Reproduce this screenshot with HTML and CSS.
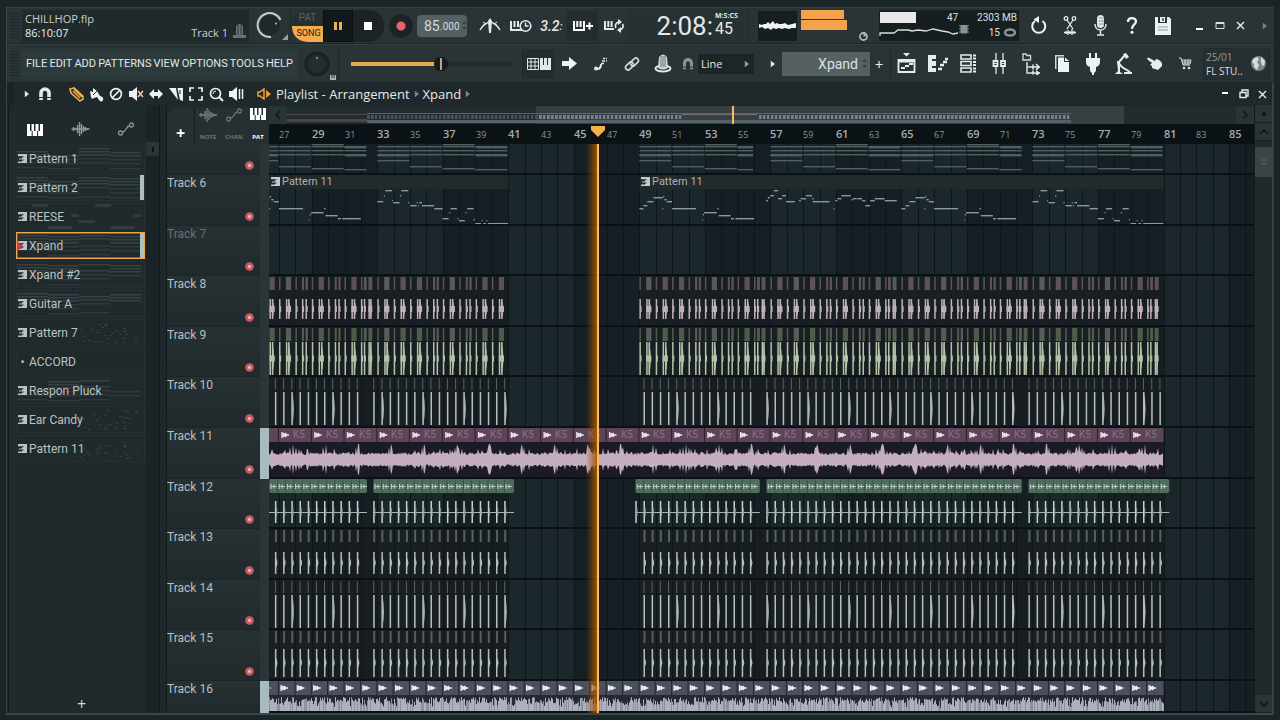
FILE: index.html
```html
<!DOCTYPE html>
<html lang="en">
<head>
<meta charset="utf-8">
<title>CHILLHOP.flp</title>
<link rel="stylesheet" href="styles.css">
</head>
<body>
<svg class="sprite" aria-hidden="true">
  <symbol id="piano" viewBox="0 0 16 12"><path d="M0 0h3v7h1.500V0h2.500v0h0v7h1.500V0h3v7H13V0h3v12H0z" fill="currentColor"/><path d="M5.200 7v5M10.600 7v5" stroke="#20292b" stroke-width="1"/></symbol>
  <symbol id="wave" viewBox="0 0 18 14"><path d="M0 7h18M2 5v4M4 6v2M6 3v8M8 0v14M10 2v10M12 4v6M14 5v4M16 6v2" stroke="currentColor" stroke-width="1.500" fill="none"/></symbol>
  <symbol id="auto" viewBox="0 0 16 14"><g fill="none" stroke="currentColor" stroke-width="1.300"><circle cx="2.500" cy="11" r="2"/><circle cx="13.500" cy="3" r="2"/><path d="M4.500 10c4 0 3-6 7-6"/></g></symbol>
  <symbol id="clip" viewBox="0 0 9 9"><path d="M0 0h9v9H0V7.500h4V6H1V4.500h3V3H0z" fill="currentColor"/><path d="M0 2.200h5.500v1H0zM0 5.400h5.500v1H0z" fill="#20292b"/></symbol>
  <symbol id="magnet" viewBox="0 0 16 16"><path d="M4 14V7a4 4 0 0 1 8 0v7" fill="none" stroke="currentColor" stroke-width="3.600"/><path d="M1 11.500h14" stroke="#20292b" stroke-width="1"/></symbol>
  <symbol id="tri" viewBox="0 0 6 8"><path d="M1 0l5 4-5 4z" fill="currentColor"/></symbol>
</svg>
<div class="app">
  <header class="toolbar">
    <div class="bar">
      <span class="grip"></span>
      <div class="hint">
        <div class="hint-text"><span>CHILLHOP.flp</span><span class="bright">86:10:07</span></div>
        <span class="hint-track">Track 1</span>
        <svg class="i" width="13" height="17" viewBox="0 0 13 17"><path d="M3 3q3.500-4 7 0v9h3v3H0v-3h3z" fill="#677173"/><path d="M5 2v10M8 2v10" stroke="#323b3d"/></svg>
      </div>
      <div class="knob-box">
        <svg width="36" height="36" viewBox="0 0 36 36"><circle cx="16" cy="17" r="10" fill="#20282a"/><path d="M17 29a12 12 0 1 1 9.500-17" fill="none" stroke="#c3cbcb" stroke-width="2"/><circle cx="22" cy="15.500" r="1" fill="#bcc5c5"/><path d="M34 26v6h-6z" fill="#98a1a2"/></svg>
      </div>
      <div class="transport">
        <div class="mode"><button class="pat">PAT</button><button class="song">SONG</button></div>
        <button class="pause" aria-label="Pause"><svg width="8" height="8"><path d="M0 0h3v8H0zM5 0h3v8H5z" fill="#eeb04c"/></svg></button>
        <button class="stop" aria-label="Stop"><svg width="8" height="8"><path d="M0 0h8v8H0z" fill="#fff"/></svg></button>
      </div>
      <button class="rec" aria-label="Record"></button>
      <label class="tempo"><input aria-label="Tempo" value="85"><span>.000</span><svg width="5" height="9"><path d="M0 3l2.500-3L5 3zM0 6l2.500 3L5 6z" fill="#39434a"/></svg></label>
      <div class="cells lead">
        <button class="cell" aria-label="Metronome"><svg width="22" height="16" viewBox="0 0 22 16"><path d="M1 12Q5 5 11 4q6 1 10 8" fill="none" stroke="#e4e9e9" stroke-width="1.500"/><path d="M7 6l-3-2M15 6l3-2" stroke="#e4e9e9"/><path d="M9 3l2-3 2 3-1 12h-2z" fill="#e4e9e9"/></svg></button>
        <button class="cell" aria-label="Wait for input"><svg width="22" height="14" viewBox="0 0 22 14"><path d="M1 2v9h11M4.500 2v6M8 2v6" fill="none" stroke="#e4e9e9" stroke-width="2"/><circle cx="15.500" cy="7" r="5.300" fill="#2a3335" stroke="#e4e9e9" stroke-width="1.600"/><path d="M15.500 3.500V7h3" fill="none" stroke="#e4e9e9" stroke-width="1.300"/></svg></button>
        <button class="cell count" aria-label="Countdown">3.2<small>:</small></button>
        <button class="cell on" aria-label="Overdub"><svg width="20" height="14" viewBox="0 0 20 14"><path d="M1 2v9h10V2M4.300 2v6M7.600 2v6" fill="none" stroke="#fff" stroke-width="2"/><path d="M13 7h7M16.500 3.500v7" stroke="#fff" stroke-width="2"/></svg></button>
        <button class="cell" aria-label="Loop record"><svg width="20" height="14" viewBox="0 0 20 14"><path d="M1 2v8h9M4.300 2v6M7.600 2v6" fill="none" stroke="#e4e9e9" stroke-width="2"/><path d="M12 9a4 4 0 0 1 3-6M18.500 5a4 4 0 0 1-3 6" fill="none" stroke="#e4e9e9" stroke-width="1.700"/><path d="M14 0l4 3-4 3zM17 8v6l-4-3z" fill="#e4e9e9"/></svg></button>
      </div>
      <div class="clock"><span class="big">2:08:</span><span class="small"><i>M:S:CS</i>45</span></div>
      <div class="scope"><svg width="39" height="30" viewBox="0 0 39 30"><path d="M1 13l3 1 2-1 2 0 2-2 2 2 3-3 2 3 2-1 2 1 3 0 3-1 3 2 4-1 4-1v5l-4 0-3 1-4-1-3 1-3-1-3 1-3-1-2 2-3-2-3 1-3-2-3 1z" fill="#eef2f2"/></svg></div>
      <div class="meter"><span></span><span class="wide"></span><svg width="11" height="9" viewBox="0 0 11 9"><circle cx="5.500" cy="4.500" r="3.600" fill="none" stroke="#bac1c1" stroke-width="1.600"/><path d="M5.500 4.500V1l3 3z" fill="#bac1c1"/></svg></div>
      <div class="cpu">
        <svg width="80" height="30" viewBox="0 0 80 30"><path d="M1 2h36v11H1z" fill="#e7e9e9"/><path d="M1 26v-3h14l4-3 10 0 4 1 6-1 8 1 7-2 9 2 6 1 5 2 5-1" fill="none" stroke="#d8dede" stroke-width="1.300"/></svg>
        <div class="cpu-num"><span>47</span><svg width="11" height="9"><path d="M2 0h6v8H2zM0 1h10M0 4h10M0 7h10" fill="#889193" stroke="#889193"/></svg></div>
        <div class="cpu-mem"><span>2303 MB</span><span>15 <svg width="14" height="9"><ellipse cx="7" cy="4.500" rx="5" ry="3" fill="none" stroke="#8b9394" stroke-width="2.500"/></svg></span></div>
      </div>
      <div class="cells">
        <button class="cell" aria-label="Undo"><svg width="18" height="19" viewBox="0 0 18 19"><path d="M5 5a6.500 6.500 0 1 0 7.500 0" fill="none" stroke="#f1f4f4" stroke-width="2"/><path d="M9 0v7L3.500 3.500z" fill="#f1f4f4"/></svg></button>
        <button class="cell" aria-label="Cut"><svg width="14" height="20" viewBox="0 0 14 20"><g fill="none" stroke="#e6ebeb" stroke-width="1.300"><circle cx="3" cy="2.500" r="1.800"/><circle cx="11" cy="2.500" r="1.800"/><path d="M4 4l6 9M10 4L4 13"/><path d="M1 16.500h12M3 15v3M5 14v5M7 15v3M9 13v6M11 15v3"/></g></svg></button>
        <button class="cell" aria-label="Microphone"><svg width="13" height="21" viewBox="0 0 13 21"><rect x="3" width="7" height="13" rx="3.500" fill="#dfe5e5"/><path d="M5 3h5M5 6h5M5 9h5" stroke="#8d9798"/><path d="M1 9c0 8 11 8 11 0M6.500 15v5M3 20h7" fill="none" stroke="#dfe5e5" stroke-width="1.500"/></svg></button>
        <button class="cell" aria-label="Help"><svg width="12" height="17" viewBox="0 0 12 17"><path d="M2 5c0-5 8-5 8-.5C10 7.500 6 7.500 6 12" fill="none" stroke="#f3f5f5" stroke-width="2.300"/><circle cx="6" cy="15.300" r="1.500" fill="#f3f5f5"/></svg></button>
        <button class="cell" aria-label="Save"><svg width="16" height="18" viewBox="0 0 16 18"><path d="M0 0h3v6h9V0h2l2 2v16H0z" fill="#eef1f1"/><path d="M5 0h5v5H5z" fill="#eef1f1"/><path d="M8 1v3" stroke="#333d3f" stroke-width="1.500"/><path d="M3 10h10M3 13h10" stroke="#8d9798"/></svg></button>
      </div>
      <span class="fill"></span>
      <div class="win">
        <button aria-label="Minimize"><svg width="8" height="10"><path d="M0 8h7" stroke="#fff" stroke-width="2"/></svg></button>
        <button aria-label="Restore"><svg width="10" height="9"><path d="M1 1.500h8v6H1z" fill="none" stroke="#d8dddd"/><path d="M1 2h8" stroke="#d8dddd" stroke-width="2"/></svg></button>
        <button aria-label="Close"><svg width="9" height="9"><path d="M1 1l7 7M8 1L1 8" stroke="#e8ecec" stroke-width="1.400"/></svg></button>
        <svg class="dim" width="5" height="8"><use href="#tri"/></svg>
      </div>
    </div>
    <div class="bar second">
      <span class="grip"></span>
      <nav class="menu"><a href="#">FILE</a><a href="#">EDIT</a><a href="#">ADD</a><a href="#">PATTERNS</a><a href="#">VIEW</a><a href="#">OPTIONS</a><a href="#">TOOLS</a><a href="#">HELP</a></nav>
      <div class="knob-box pitch"><svg width="36" height="34" viewBox="0 0 36 34"><circle cx="16" cy="17" r="12" fill="#1d2527" stroke="#161d1f"/><circle cx="16" cy="17" r="9" fill="#242d2f"/><circle cx="16" cy="11" r="1" fill="#9aa5a6"/><path d="M29 28h6v5h-6z" fill="#aab2b2"/><path d="M31 28v3M33 28v3" stroke="#333"/></svg></div>
      <input class="slider" type="range" aria-label="Main pitch" value="56">
      <div class="cells lead2">
        <button class="cell on" aria-label="Typing keyboard"><svg width="24" height="12" viewBox="0 0 24 12"><path d="M.5.5h11v11H.5zM.5 4h11M.5 8h11M4 .5v11M8 .5v11" fill="none" stroke="#e2e7e7"/><path d="M13 0h3v7h1V0h3v7h1V0h3v12H13z" fill="#e2e7e7"/></svg></button>
        <button class="cell" aria-label="Step edit"><svg width="15" height="13"><path d="M0 4h7V0l8 6.500L7 13V9H0z" fill="#f1f4f4"/></svg></button>
        <button class="cell" aria-label="Slide"><svg width="15" height="14" viewBox="0 0 15 14"><circle cx="3" cy="11.500" r="2" fill="#e4e9e9"/><path d="M4 12q4 0 4-5" fill="none" stroke="#e4e9e9" stroke-width="2"/><path d="M8 6.500h3M10 1.500h2M13 1.500h1M9 4h3M13 4h1" stroke="#e4e9e9" stroke-width="1.600"/></svg></button>
        <button class="cell" aria-label="Link"><svg width="16" height="16" viewBox="0 0 16 16"><g fill="none" stroke="#d6dcdc" stroke-width="1.600"><rect x="1" y="7.500" width="9" height="5" rx="2.500" transform="rotate(-45 5.500 10)"/><rect x="6" y="3.500" width="9" height="5" rx="2.500" transform="rotate(-45 10.500 6)"/></g></svg></button>
        <button class="cell" aria-label="Multilink"><svg width="18" height="19" viewBox="0 0 18 19"><ellipse cx="9" cy="14.500" rx="7.500" ry="3" fill="#2a3335" stroke="#e4e9e9" stroke-width="2"/><path d="M5 3q4-5 8 0l1 11q-5 3-10 0z" fill="#cfd6d6"/><path d="M7 2v11M9 2v11M11 2v11" stroke="#697274"/></svg></button>
      </div>
      <svg class="snap-icon" width="16" height="14" viewBox="0 0 16 16"><use href="#magnet"/></svg>
      <label class="snap"><select aria-label="Snap"><option>Line</option></select><svg width="5" height="8"><use href="#tri"/></svg></label>
      <svg class="pick-arrow" width="5" height="8"><use href="#tri"/></svg>
      <button class="pick">Xpand <svg width="5" height="9"><path d="M0 3l2.500-3L5 3zM0 6l2.500 3L5 6z" fill="#39434a"/></svg></button>
      <button class="plus">+</button>
      <div class="cells last">
        <button class="cell" aria-label="Playlist"><svg width="19" height="21" viewBox="0 0 19 21"><path d="M6 0h7l-3.500 3.500z" fill="#e8ecec"/><path d="M1.500 7h16v12h-16z" fill="none" stroke="#e8ecec" stroke-width="1.800"/><path d="M1 8.500h17M4 15h4M8 13h4M12 11h4" stroke="#e8ecec" stroke-width="2"/></svg></button>
        <button class="cell" aria-label="Piano roll"><svg width="20" height="18" viewBox="0 0 20 18"><path d="M0 0h8v4H4v2h4v5H4v2h4v4H0z" fill="#e8ecec"/><path d="M10 14h4M12 10h4M15 7h4M17 4h3" stroke="#e8ecec" stroke-width="2.500"/></svg></button>
        <button class="cell" aria-label="Channel rack"><svg width="17" height="19" viewBox="0 0 17 19"><path d="M1 1h10v4H1zM1 7.500h10v4H1zM1 14h10v4H1z" fill="none" stroke="#e8ecec" stroke-width="1.600"/><path d="M13 1.500h3M13 4.500h3M13 8h3M13 11h3M13 14.500h3M13 17.500h3" stroke="#e8ecec" stroke-width="2"/></svg></button>
        <button class="cell" aria-label="Mixer"><svg width="15" height="21" viewBox="0 0 15 21"><path d="M4 0v21M11 0v21" stroke="#d6dcdc" stroke-width="1.400"/><path d="M1.500 8h4v5h-4zM9 8h4v5H9z" fill="#2a3335" stroke="#e8ecec" stroke-width="1.800"/><path d="M2 10.500h3M9.500 10.500h3" stroke="#e8ecec"/></svg></button>
        <button class="cell" aria-label="Browser"><svg width="18" height="22" viewBox="0 0 18 22"><path d="M1 1h3l1 1.500h3.500V7H1z" fill="none" stroke="#d6dcdc" stroke-width="1.300"/><path d="M5 9v11h4M5 14h4" fill="none" stroke="#d6dcdc" stroke-width="1.500"/><path d="M9 14h9M9 20h9M11 11.500v5M14 11l3 3-3 3M11 17.500v4M14 18l3 2-3 2" fill="none" stroke="#e8ecec" stroke-width="1.500"/></svg></button>
        <button class="cell" aria-label="Project"><svg width="14" height="17" viewBox="0 0 14 17"><path d="M0 0h9v1.500H1.500V14H0z" fill="#cfd6d6"/><path d="M3 2.500h6V7h5v10H3z" fill="#f1f4f4"/><path d="M10 2.500l4 3.500h-4z" fill="#f1f4f4"/></svg></button>
        <button class="cell" aria-label="Plugins"><svg width="14" height="22" viewBox="0 0 14 22"><path d="M3 0h2v5h4V0h2v5h3v4q0 4-4 5v3q0 2-2 3v2H6v-2q-2-1-2-3v-3q-4-1-4-5V5h3z" fill="#eef1f1"/></svg></button>
        <button class="cell" aria-label="Tempo tap"><svg width="17" height="22" viewBox="0 0 17 22"><path d="M4 9l6-7M3 9l4 5 8 5" fill="none" stroke="#e8ecec" stroke-width="2"/><path d="M8 1l3-1 3 4-3 2zM2 8h3v11l3 2H0l3-3z" fill="#e8ecec"/><path d="M9 20h8" stroke="#e8ecec" stroke-width="2"/></svg></button>
        <button class="cell" aria-label="Touch"><svg width="16" height="14" viewBox="0 0 16 14"><path d="M0 1q2-1 4 1l4 2 1-2q3 0 6 4v3l-4 4-6-2v-2L3 8l2-2-4-3z" fill="#e8ecec"/></svg></button>
        <button class="cell" aria-label="Shop"><svg width="13" height="13" viewBox="0 0 13 13"><path d="M0 1h2l2 7h7M3 3h9l-1 4H4M6 3v4M9 3v4M3 5h9" fill="none" stroke="#d6dcdc"/><circle cx="5" cy="11" r="1.300" fill="#d6dcdc"/><circle cx="10" cy="11" r="1.300" fill="#d6dcdc"/></svg></button>
      </div>
      <div class="news"><span>25/01<b>FL STU..</b></span><svg width="17" height="17" viewBox="0 0 17 17"><circle cx="8.500" cy="8.500" r="7.500" fill="#7b8686"/><path d="M3 4l4-2 2 2-2 3 2 3-2 5-3-3 0-3-2-2zM11 2l4 4-1 5-2-1-1-3z" fill="#d5dada"/></svg></div>
    </div>
  </header>

  <main class="playlist">
    <div class="title">
      <svg class="t-arrow" width="5" height="8"><use href="#tri"/></svg>
      <button aria-label="Snap"><svg width="16" height="16"><use href="#magnet"/></svg></button>
      <span class="space"></span>
      <button aria-label="Draw"><svg width="15" height="15" viewBox="0 0 15 15"><path d="M1 2l4-1 9 8v3l-3 2L2 6zM4 4l7 7M5 2l8 8" fill="none" stroke="#f0ab48" stroke-width="1.600"/></svg></button>
      <button aria-label="Paint"><svg width="15" height="15" viewBox="0 0 15 15"><path d="M1 4l3 1 0-4 4 3 3 5q4 1 3 4t-4 0l-2-3-3 1-2 1-1-2z" fill="#eef1f1"/><path d="M4 8l4-4" stroke="#20292b"/></svg></button>
      <button aria-label="Delete"><svg width="14" height="14"><circle cx="7" cy="7" r="5.400" fill="none" stroke="#eef1f1" stroke-width="1.700"/><path d="M3 11l8-8" stroke="#eef1f1" stroke-width="1.700"/></svg></button>
      <button aria-label="Mute"><svg width="15" height="14" viewBox="0 0 15 14"><path d="M0 4h3l5-4v14l-5-4H0z" fill="#eef1f1"/><path d="M9 4l5 6M14 4l-5 6" stroke="#f0c9b0" stroke-width="1.500"/></svg></button>
      <button aria-label="Slip"><svg width="14" height="10"><path d="M0 5l5-5v3h4V0l5 5-5 5V7H5v3z" fill="#eef1f1"/></svg></button>
      <button aria-label="Slice"><svg width="15" height="15" viewBox="0 0 15 15"><path d="M0 1h7l2 12z" fill="#eef1f1"/><path d="M8.500 1H14v13l-3-1z" fill="#eef1f1"/><path d="M11 3v4" stroke="#20292b"/></svg></button>
      <button aria-label="Select"><svg width="14" height="14"><path d="M1 5V1h4M9 1h4v4M13 9v4H9M5 13H1V9" fill="none" stroke="#eef1f1" stroke-width="1.700"/></svg></button>
      <button aria-label="Zoom"><svg width="15" height="15"><circle cx="6.500" cy="6.500" r="5" fill="none" stroke="#eef1f1" stroke-width="1.700"/><path d="M10 10l4 4" stroke="#eef1f1" stroke-width="2"/><path d="M4 7q0-3 3-3" fill="none" stroke="#eef1f1"/></svg></button>
      <button aria-label="Playback"><svg width="15" height="14"><path d="M0 4h3l5-4v14l-5-4H0z" fill="#eef1f1"/><path d="M10.500 2v10M13.500 2v10" stroke="#eef1f1" stroke-width="1.500"/></svg></button>
      <div class="crumbs"><svg width="15" height="12"><path d="M1 4h2l4-3v10L3 8H1z" fill="none" stroke="#f0a040" stroke-width="1.500"/><path d="M9 2l5 4-5 4z" fill="#f09a35"/></svg><span>Playlist - Arrangement</span><svg class="dim" width="5" height="8"><use href="#tri"/></svg><span>Xpand</span><svg class="dim" width="5" height="8"><use href="#tri"/></svg></div>
      <span class="fill"></span>
      <div class="win sub">
        <button aria-label="Minimize"><svg width="8" height="10"><path d="M0 4h6" stroke="#fff" stroke-width="2"/></svg></button>
        <button aria-label="Restore"><svg width="10" height="10"><path d="M1 3.500h6v5H1zM3 3V1h6v6H7" fill="none" stroke="#e8ecec" stroke-width="1.400"/></svg></button>
        <button aria-label="Close"><svg width="9" height="9"><path d="M1 1l7 7M8 1L1 8" stroke="#e8ecec" stroke-width="1.400"/></svg></button>
      </div>
    </div>
    <div class="work">
      <aside class="picker">
        <div class="tabs"><button class="active" aria-label="Patterns"><svg width="16" height="12"><use href="#piano"/></svg></button><button aria-label="Audio"><svg width="19" height="14"><use href="#wave"/></svg></button><button aria-label="Automation"><svg width="16" height="14"><use href="#auto"/></svg></button></div>
        <ul class="patterns" id="patterns"></ul>
        <button class="add">+</button>
      </aside>
      <div class="pick-scroll"><button aria-label="Scroll"><svg width="2" height="5"><path d="M0 0h2v5H0z" fill="#0e1416"/></svg></button></div>
      <section class="tracks">
        <div class="corner">
          <button class="add-track">+</button>
          <button><svg width="18" height="14"><use href="#wave"/></svg>NOTE</button>
          <button><svg width="16" height="14"><use href="#auto"/></svg>CHAN</button>
          <button class="active"><svg width="16" height="12"><use href="#piano"/></svg>PAT</button>
        </div>
        <div class="heads" id="heads"></div>
      </section>
      <section class="arrange">
        <div class="overview"><button aria-label="Scroll left"><svg width="6" height="10"><path d="M5 1L1 5l4 4" fill="none" stroke="#0e1517" stroke-width="1.500"/></svg></button><div class="map" id="map"></div><button aria-label="Scroll right"><svg width="6" height="10"><path d="M1 1l4 4-4 4" fill="none" stroke="#0e1517" stroke-width="1.500"/></svg></button></div>
        <div class="ruler" id="ruler"></div>
        <div class="lanes" id="lanes"></div>
        <svg class="playhead" id="playhead" aria-hidden="true"></svg>
      </section>
      <div class="vscroll"><button aria-label="Menu"><svg width="4" height="4"><circle cx="2" cy="2" r="2" fill="#0e1517"/></svg></button><button aria-label="Up"><svg width="10" height="6"><path d="M1 5l4-4 4 4" fill="none" stroke="#0e1517" stroke-width="1.500"/></svg></button><span class="thumb"><svg width="6" height="6"><path d="M0 1h6M0 5h6" stroke="#5c6668"/></svg></span><span class="fill"></span><button aria-label="Down"><svg width="10" height="6"><path d="M1 1l4 4 4-4" fill="none" stroke="#0e1517" stroke-width="1.500"/></svg></button></div>
    </div>
  </main>
</div>
<script src="app.js"></script>
</body>
</html>
```
FILE: styles.css
```css
* { box-sizing: border-box; }
body { margin: 0; background: #1c2427; color: #c9d0d0; font: 12px/14px "Open Sans", "Noto Sans", sans-serif; }
button, input, select { font: inherit; color: inherit; background: none; border: 0; padding: 0; margin: 0; }
button { display: flex; align-items: center; justify-content: center; }
svg { display: block; flex: none; }
.sprite { position: absolute; width: 0; height: 0; }
.fill { flex: 1; }
.dim { color: #7d8788; }

.app { display: flex; flex-direction: column; min-height: 100vh; padding: 7px 6px 5px 6px; background: #1b2426; }
.toolbar { background: #2a3436; border-left: 1px solid #394345; }
.bar { display: flex; align-items: center; height: 37px; border-bottom: 1px solid #1c2527; border-top: 1px solid #343e40; }
.bar.second { height: 39px; }
.grip { width: 9px; height: 29px; margin: 0 3px 0 3px; background: repeating-linear-gradient(#2a3436 0 2px, #1e2729 2px 3px); }
.hint { display: flex; align-items: flex-start; width: 226px; height: 32px; padding: 2px 2px 0 3px; background: #20292b; }
.hint-text { flex: 1; font-size: 11px; }
.hint-text span { display: block; }
.bright { color: #eef1f1; }
.hint-track { font-size: 11px; padding: 14px 5px 0 0; }
.hint .i { margin-top: 11px; }
.knob-box { width: 43px; height: 36px; border-left: 1px solid #20292b; border-right: 1px solid #20292b; padding-left: 5px; }
.transport { display: flex; width: 92px; height: 32px; margin-left: 1px; background: #1b2325; border-radius: 15px; overflow: hidden; }
.mode { width: 31px; font: 10px/15px Roboto, sans-serif; }
.mode button { width: 31px; height: 16px; }
.pat { color: #5a6466; background: #262f31; }
.mode .song { padding-left: 2px; font-size: 9px; color: #2b1c08; background: #f2ab50; border-radius: 0 0 0 14px; }
.pause { width: 30px; background: #12191b; border: 1px solid #0b1113; }
.stop { width: 30px; }
.rec { width: 24px; height: 24px; margin: 0 4px 0 5px; border-radius: 50%; background: radial-gradient(circle, #ee6270 0 4px, #1b2325 5px 11px); }
.tempo { display: flex; align-items: center; width: 50px; height: 22px; padding-left: 7px; background: #556062; border-radius: 4px; color: #d5dada; font: 10px/20px Roboto, sans-serif; }
.tempo input { width: 16px; font-size: 14px; }
.tempo span { padding-top: 2px; }
.tempo svg { margin-left: 2px; }
.cells { display: flex; }
.lead { margin-left: 7px; }
.cell { width: 31px; height: 30px; }
.cell.on { background: #232c2e; }
.count { font: italic 500 14px/20px Roboto, sans-serif; color: #e4e9e9; }
.clock { display: flex; justify-content: flex-end; align-items: center; width: 121px; height: 32px; padding-right: 10px; background: #273133; color: #e2e9e8; font: 26px/30px Roboto, sans-serif; border: 1px solid #242d2f; }
.small { display: flex; flex-direction: column; width: 24px; padding-bottom: 1px; font-size: 16px; line-height: 20px; }
.small i { height: 7px; font: bold 7px/8px "Open Sans", sans-serif; white-space: nowrap; }
.big { padding-right: 2px; }
.scope { width: 39px; height: 30px; margin-left: 8px; background: #161e20; }
.meter { width: 74px; height: 32px; margin-left: 4px; display: flex; flex-direction: column; gap: 1px; }
.meter span { width: 43px; height: 9px; background: #f4a24c; }
.meter .wide { width: 46px; height: 10px; }
.meter svg { margin: 1px 0 0 57px; }
.cpu { display: flex; width: 140px; height: 31px; margin-left: 4px; padding-right: 2px; background: #161e20; color: #dde2e2; font: 10px/15px Roboto, sans-serif; }
.cpu-num { width: 22px; margin-left: -12px; }
.cpu-num svg { margin: 0 0 0 12px; }
.cpu-mem { flex: 1; display: flex; flex-direction: column; align-items: flex-end; white-space: nowrap; }
.cpu-mem span { display: flex; align-items: center; gap: 3px; }
.cpu + .cells { margin-left: 4px; }
.win { display: flex; align-items: center; gap: 11px; padding-right: 7px; }
.win .dim { margin-left: 6px; }

.menu { display: flex; justify-content: space-between; align-items: center; width: 275px; height: 30px; padding: 0 4px; background: #2c3a3b; font: 11px/16px Roboto, sans-serif; }
.menu a { color: #e2e8e8; text-decoration: none; }
.knob-box.pitch { width: 41px; height: 34px; border-left: 0; margin-left: 1px; padding-left: 3px; }
.slider { appearance: none; width: 162px; height: 16px; margin: 0 9px 0 12px; background: linear-gradient(90deg, #f0a552 0 56%, #222b2d 56%) center / 100% 4px no-repeat; }
.slider::-webkit-slider-thumb { appearance: none; width: 14px; height: 14px; border-radius: 50%; background: linear-gradient(90deg, #161d1f 5px, #b5a79a 5px 7px, #161d1f 7px); border: 1px solid #0b1012; }
.lead2 { border-left: 1px solid #20292b; }
.snap-icon { margin-left: 2px; color: #899294; }
.snap { display: flex; align-items: center; width: 56px; height: 20px; margin-left: 2px; padding: 0 5px 0 3px; background: #1d2527; color: #e4e9e9; }
.snap svg { color: #98a1a2; }
.snap select { appearance: none; flex: 1; font-size: 11px; }
.pick-arrow { margin: 0 7px 0 16px; color: #e8ecec; }
.pick { gap: 4px; width: 88px; height: 24px; padding-right: 3px; justify-content: flex-end; background: #556062; color: #dbe1e1; font: 14px/20px Roboto, sans-serif; }
.plus { width: 18px; font-size: 15px; color: #e8ecec; }
.last { margin-left: 2px; border-left: 1px solid #20292b; }
.news { display: flex; flex: 1; align-items: center; justify-content: space-between; height: 32px; margin: 0 4px 0 2px; padding: 0 2px; background: #263032; border: 1px solid #222b2d; font-size: 10px; color: #929b9c; white-space: nowrap; }
.news b { display: block; font-weight: 400; color: #d8dddd; }

.playlist { display: flex; flex-direction: column; flex: 1; border-left: 1px solid #394345; border-right: 2px solid #394345; border-bottom: 2px solid #39464b; background: #1e2729; }
.title { display: flex; align-items: center; height: 22px; padding-left: 10px; background: #1f282a; border-left: 7px solid #1a2224; color: #e4e9e9; }
.title button { width: 20px; height: 20px; }
.t-arrow { margin-right: 6px; }
.title .space { width: 11px; }
.crumbs { display: flex; align-items: center; gap: 4px; margin-left: 11px; font-size: 13px; line-height: 18px; }
.title .win { gap: 0; padding: 0 1px 0 0; }
.title .win button { width: 18px; }

.work { display: flex; flex: 1; }
.picker { display: flex; flex-direction: column; width: 138px; padding: 0 1px 0 9px; background: #20292b; border-left: 1px solid #141b1d; margin-left: 1px; }
.tabs { display: flex; justify-content: space-between; align-items: flex-end; height: 40px; padding: 0 11px 9px 9px; color: #8c9696; }
.tabs .active, .corner .active { color: #fff; }
.patterns { list-style: none; margin: 0; padding: 0; display: flex; flex-direction: column; gap: 2px; flex: 1; }
.patterns li { position: relative; height: 27px; margin-left: -2px; background: #20292b; border: 1px solid #252e30; }
.patterns button { position: relative; display: flex; justify-content: flex-start; gap: 2px; width: 100%; height: 100%; padding-left: 1px; font: 12px/20px Roboto, sans-serif; color: #bcc3c3; }
.patterns .prev { position: absolute; left: 0; top: 0; width: 100%; }
.patterns .sel { border: 1px solid #f0a552; outline: 1px solid #8a6234; outline-offset: -2px; }
.patterns .used::after { content: ""; position: absolute; right: 0; top: 0; bottom: 0; width: 4px; background: #aebfc1; }
.patterns .sel::before { content: ""; position: absolute; z-index: 1; left: 0; top: 8px; border: 5px solid transparent; border-left: 6px solid #d6305e; border-right: 0; }
.bullet { width: 9px; text-align: center; }
.add { height: 18px; font-size: 16px; color: #d5dada; background: #1f282a; }
.pick-scroll { width: 14px; padding-top: 37px; background: #1a2325; border-right: 1px solid #12191b; margin-right: 6px; }
.pick-scroll button { width: 13px; height: 14px; background: #2b3537; }
.tracks { display: flex; flex-direction: column; width: 103px; background: #20292b; border-left: 1px solid #12191b; }
.corner { display: flex; align-items: flex-end; height: 39px; }
.corner button { flex-direction: column; justify-content: space-between; width: 26px; height: 36px; padding-bottom: 3px; background: #263032; color: #6c7678; font: bold 6px/8px "Open Sans", sans-serif; }
.corner .add-track { justify-content: center; width: 28px; padding-top: 16px; font-size: 16px; color: #fff; border-right: 1px solid #161d1f; border-radius: 10px 0 0 0; }
.corner .active { width: 22px; color: #fff; }
.heads, .lanes { flex: 1; display: grid; grid-template-rows: 31px repeat(10, minmax(50px, 1fr)) 32px; }
.head { display: flex; justify-content: space-between; border-right: 9px solid #2b3537; background: linear-gradient(#273032, #20292b); box-shadow: inset 0 -1px #1b2426; font: 12px/16px Roboto, sans-serif; color: #b8c0c0; }
.head.lit { border-right-color: #a8bcc0; }
.head.off { color: #657072; }
.head button { align-self: flex-end; width: 9px; height: 9px; margin: 0 6px 5px 0; border: 1px solid #c0656c; border-radius: 50%; background: radial-gradient(circle, #f5b5b3 0 1px, #d75b64 2px 3px, #3a2024 4px); }
.head:last-child button { visibility: hidden; }
.arrange { position: relative; display: flex; flex-direction: column; flex: 1; min-width: 0; overflow: hidden; background: #162024; }
.overview { display: flex; height: 19px; padding-top: 1px; background: #1d2628; }
.overview button { width: 18px; background: #2a3436; }
.map { flex: 1; min-width: 0; overflow: hidden; background: #222b2e; }
.ruler { position: relative; height: 20px; background: #0a1215; }
.ruler span { position: absolute; top: 4px; font: 9px/14px "Open Sans", sans-serif; color: #8b9495; }
.ruler .major { top: 3px; font-size: 11px; font-weight: 600; color: #a5adad; }
.lane { position: relative; overflow: hidden; border-bottom: 2px solid #0a1114; }
.lane svg { position: absolute; left: 0; top: 0; }
.lane span { position: absolute; font: 11px/14px Roboto, sans-serif; color: #aab2b2; }
.lane .tag { font-size: 10px; color: #8a7087; }
.playhead { position: absolute; left: 310px; top: 19px; width: 30px; height: 100%; }
.vscroll { display: flex; flex-direction: column; width: 18px; background: #20292b; border-left: 1px solid #141b1d; }
.vscroll button { height: 18px; background: #2a3436; border-bottom: 1px solid #182022; }
.vscroll .thumb { display: grid; place-items: center; height: 30px; margin-top: 6px; background: #3a4547; }
```
FILE: app.js
```
const BAR = 16.38;
const X = bar => 10 + (bar - 27) * BAR;
const el = id => document.getElementById(id);
const r = n => Math.round(n * 10) / 10;
const noise = n => { const v = Math.sin(n * 127.1) * 43758.5453; return v - Math.floor(v); };
const rect = (x, y, w, h, c, o) => `<rect x="${r(x)}" y="${y}" width="${r(w)}" height="${r(h)}" fill="${c}"${o ? ` opacity="${o}"` : ""}/>`;

/* pattern picker */
const patterns = ["Pattern 1", "Pattern 2", "REESE", "Xpand", "Xpand #2", "Guitar A", "Pattern 7", "ACCORD", "Respon Pluck", "Ear Candy", "Pattern 11"];
const used = { "Pattern 2": 1, "Xpand": 1 };
const chordRows = [2, 5, 8, 12, 16, 21];
function preview(name, n) {
  let s = "";
  if (name === "ACCORD") return s;
  if (name === "REESE") return [[15,0],[78,0],[54,10],[62,16],[31,22],[94,22],[116,10]].map(([x, y], i) => rect(x, y, i === 2 || i === 6 ? 8 : i > 3 ? 24 : 16, 3, "#323c3e")).join("");
  if (["Pattern 7", "Ear Candy", "Pattern 11"].includes(name)) {
    for (let i = 0; i < 34; i++) s += rect(62 + noise(i + n) * 60, name === "Pattern 11" ? r(4 + i * .5 + noise(i) * 5) : 3 + Math.floor(noise(i * 3 + n) * 20), 2, 1, "#3a4547");
    return s;
  }
  for (let c = 0; c < 4; c++) chordRows.forEach((y, k) => {
    if (noise(c * 9 + k + n) > .25) s += rect(c * 31, y + (c % 2), 31, 1.5, k < 3 ? "#364143" : "#2f393b");
  });
  return s;
}
el("patterns").innerHTML = patterns.map((name, n) => `<li class="${used[name] ? "used " : ""}${name === "Xpand" ? "sel" : ""}"><svg class="prev" height="25">${preview(name, n)}</svg><button>${name === "ACCORD" ? '<span class="bullet">•</span>' : '<svg width="9" height="9"><use href="#clip"/></svg>'}${name}</button></li>`).join("");

/* track headers */
let heads = "";
for (let t = 5; t <= 16; t++) heads += `<div class="head${t === 11 || t === 16 ? " lit" : ""}${t === 7 ? " off" : ""}"><span>${t === 5 ? "" : "Track " + t}</span><button aria-label="Mute track ${t}"></button></div>`;
el("heads").innerHTML = heads;

/* ruler */
let marks = "";
for (let b = 27; b <= 85; b += 2) marks += `<span class="${b % 4 === 1 ? "major" : ""}" style="left:${Math.round(X(b))}px">${b}</span>`;
el("ruler").innerHTML = marks;

/* overview strip */
let m = rect(249, 0, 588, 18, "#354043");
m += rect(0, 8, 80, 1, "#51484e") + rect(0, 13, 80, 3, "#414a48") + rect(80, 7, 704, 1, "#59646a") + rect(80, 14, 704, 3, "#566068");
for (let x = 80; x < 784; x += 4) if (x < 396 || x > 468) m += rect(x, 9, 2 + noise(x), 4, x < 249 ? "#485257" : "#77818a");
m += rect(395, 8, 75, 1, "#7a6b73") + rect(445, 0, 2, 18, "#f3bd5c");
el("map").innerHTML = `<svg width="1200" height="18">${m}</svg>`;

/* note data: x start, x end, y; 49.14 units per bar */
const motifA = [28, [28,40,327],[40,52,318],[52,70,306],[70,98,296],[99,103,292],[103,110,300],[110,126,306],[97,100,327],[126,198,327],[216,218,360],[218,222,346],[222,260,341],[262,266,328],[266,302,350],[303,312,358],[316,372,358]];
const motifB = [421, [408,413,304],[413,420,296],[420,432,289],[432,444,274],[444,456,297],[456,468,289],[468,494,306],[507,512,305],[512,528,297],[528,546,288],[546,550,297],[548,598,306],[611,614,328],[616,622,305],[622,634,298],[634,662,288],[664,668,300],[668,680,297],[682,696,297],[696,706,305],[706,720,318],[720,734,305],[734,764,297],[764,800,305]];
const motifC = [366, [366,384,306],[386,389,289],[390,410,274],[410,413,305],[414,433,310],[434,438,289],[438,459,274],[459,462,309],[465,484,318],[484,487,310],[488,491,318],[492,500,310],[500,537,318],[537,562,327],[562,580,358],[582,585,341],[586,605,327],[607,610,358],[611,629,363],[631,634,341],[636,655,327],[655,658,362],[660,677,372],[679,682,363],[684,692,372],[693,696,363],[698,759,372]];
const melody = (bar, [zero, ...notes]) => notes.map(([a, b, y]) => rect(X(bar) + (a - zero) / 3, Math.round(y / 3 - 76.5), (b - a) / 3, 1.4, "#8b9a99")).join("");

const grid = h => {
  let s = "";
  for (let b = 25; b < 88; b += 8) s += rect(X(b), 0, BAR * 4, h, "#1b272b");
  for (let b = 27; b < 88; b++) s += rect(Math.round(X(b)), 0, 1, h, "#0d161a");
  return s;
};
const sections = [[26, 41], [49, 81]];
const lines = (a, b) => { let s = ""; for (let i = a; i < b; i++) s += rect(Math.round(X(i)), 0, 1, 50, "#0d161a"); return s; };

function chords() {
  const rows = [[6,10,11,16,29], [2,6,10,22], [0,2,6,10,24], [2,3,6,10,11,25]];
  let s = "";
  [[25, 32.4], [33, 41], [49, 56], [57, 65], [65, 72.4], [73, 81]].forEach(([a, end]) => {
    for (let c = 0; c < 4; c++) rows[c].concat(c ? [] : [2]).forEach(y => {
      const from = a + c * 2, to = Math.min(from + 2, end);
      if (to > from) s += rect(X(from), y, (to - from) * BAR - 1, 1.4, "#4f6061");
    });
  });
  return s;
}

/* beat positions for the percussion tracks: [bar, width in bars] */
const beats = [];
sections.forEach(([a, b]) => {
  for (let i = a; i < b; i++) {
    beats.push([i, .09]);
    if (i % 8 === 0 && i !== 40) beats.push([i + .18, .18], [i + .46, .24]);
    else if (i % 8 === 4 || i % 8 === 6) beats.push([i + .4, .13], [i + .62, .14]);
    else beats.push([i + .42, .32]);
  }
});
function drums(tint, bright, top, bottom) {
  const h = bottom - top, mid = (top + bottom) / 2;
  return beats.map(([b, w], i) => {
    const x = X(b), px = w * BAR;
    let s = rect(x, 1, px, 13, i % 3 ? tint : "#656b6a", .8) + rect(x, top, 1.5, h, bright);
    if (px < 3) s += rect(x + 1, mid - 3, 1.2, 6, bright);
    else s += rect(x + px * .45, top, 1.5, h, bright) + `<path d="M${r(x + px * .45)} ${top}q${r(px * .9)} ${h / 2} 0 ${h}z" fill="${bright}"/>` + rect(x, mid - 3, px, 6, bright);
    return s;
  }).join("");
}
const hits = [];
for (let b = 26.75; b < 41; b += .5) if (b !== 32.25) hits.push(b);
for (let b = 49.25; b < 81; b += .5) if (![56.25, 72.25].includes(b)) hits.push(b);
function ticks(top, bottom, tip, bright = "#b3c0bd", head = "#566061") {
  const mid = (top + bottom) / 2;
  return hits.map((b, i) => rect(X(b), 1, tip === 0 ? 1 : 2, 12, head) + rect(X(b), top, 1.5, bottom - top, bright)
    + (tip || i % 5 === 2 ? `<path d="M${r(X(b) + 1)} ${tip ? mid - 5 : top}q3 ${tip ? 4 : mid - top} 0 ${tip ? 10 : bottom - top}z" fill="${bright}"/>` : "")).join("");
}
const arrow = (x, y, c) => `<path d="M${r(x)} ${y - 3}v6M${r(x)} ${y}h7M${r(x + 3)} ${y - 2}l2 2-2 2M${r(x + 1)} ${y - 2}l2 2-2 2" fill="none" stroke="${c}" stroke-width="1.300"/>`;

function bass() {
  let s = rect(0, 0, X(81), 50, "#1a1b26") + rect(0, 0, X(81), 14, "#5d4459"), top = "", low = "";
  for (let b = 25; b < 81; b += 2) s += rect(X(b) - 1, 0, 1, 14, "#2b202b") + arrow(X(b) + 3, 7, b === 25 ? "#a99aaa" : "#eee3ee");
  for (let x = 0; x <= X(81); x++) {
    const p = (((x - X(27)) / BAR) % 2 + 2) % 2;
    const d = Math.abs(p - .85);
    const a = d < .04 ? 16 : d < .2 && x % 3 === 0 ? 13 : 5 + noise(x) * 3 + (noise(x * 5) > .9 ? 4 : 0);
    top += `L${x} ${r(32 - a)}`; low = `L${x} ${r(32 + a * .9)}` + low;
  }
  return s + `<path d="M0 32${top}${low}z" fill="#c4aec0"/>`;
}
function shaker() {
  let s = "";
  [[26, 33], [33, 41.35], [48.75, 56.35], [56.75, 72.35], [72.75, 81.35]].forEach(([a, e], n) => {
    const x0 = n === 0 ? 0 : n === 1 ? 104 : X(a), x1 = n === 0 ? 98 : X(e);
    s += `<rect x="${r(x0)}" y="0" width="${r(x1 - x0)}" height="14" rx="2" fill="#4f6c5d"/>` + rect(x0, 33, x1 - x0, 1, "#a4b8af");
    for (let x = x0 + 2; x < x1 - 5; x += BAR / 2) s += `<path d="M${r(x)} 5v5M${r(x)} 7.500h6M${r(x + 3)} 5.500v4" stroke="#b4cbbf" fill="none" stroke-width="1.200"/>` + rect(x - 2, 0, .6, 14, "#31463b");
  });
  const all = hits.concat([48.75]);
  return s + all.map(b => rect(X(b), 22, 1.5, 22, "#c5d2cc") + rect(X(b) + 1, 29, 1.2, 8, "#879e92")).join("");
}
function kit() {
  let s = rect(0, 0, X(81), 50, "#262834") + rect(0, 0, X(81), 14, "#4c4f5e");
  for (let b = 26; b < 81; b++) s += rect(X(b) - 1, 0, 1, 14, "#22242f") + arrow(X(b) + 2, 7, b === 26 ? "#8d8f9c" : "#eef0f4");
  for (let x = 0; x < X(81); x++) { const t = 16 + noise(x * 3) * 10 * (.4 + ((x / BAR) % 1) * .7); s += rect(x, r(t), 1, 50, noise(x) > .3 ? "#aeb0bd" : "#8e909b"); }
  return s;
}
const plate = (a, b, c) => rect(Math.max(0, X(a)), 0, X(b) - Math.max(0, X(a)), 14, c);
const shade = sections.map(([a, b]) => rect(Math.max(0, X(a)), 0, X(b) - Math.max(0, X(a)), 50, "#191d21", .7)).join("");
const art = {
  5: chords,
  6: () => plate(26, 41, "#232a2d") + plate(49, 81, "#232a2d") + melody(25, motifA) + melody(33, motifC) + melody(49, motifA) + melody(57, motifB) + melody(65, motifA) + melody(73, motifC),
  7: () => "",
  8: () => shade + drums("#705e68", "#bfb1bb", 23, 43),
  9: () => shade + drums("#5c6b55", "#b3c2a8", 15, 48),
  10: () => shade + lines(27, 41) + ticks(15, 48, 0),
  11: bass,
  12: shaker,
  13: () => shade + lines(27, 41) + lines(49, 81) + ticks(23, 45, 1),
  14: () => shade + lines(27, 41) + lines(49, 81) + ticks(15, 48, 0, "#b3c0bd", "#5b6364"),
  15: () => shade + lines(27, 41) + lines(49, 81) + ticks(19, 47, 1, "#b3c0bd", "#5e5a55"),
  16: kit
};
let lanes = "";
for (let t = 5; t <= 16; t++) {
  let text = "";
  if (t === 6) [2, 372].forEach(x => { text += `<svg style="left:${x}px;top:2px" width="9" height="9" color="#c4cbcb"><use href="#clip"/></svg><span style="left:${x + 11}px">Pattern 11</span>`; });
  if (t === 11) for (let b = 27; b < 81; b += 2) text += `<span class="tag" style="left:${Math.round(X(b)) + 14}px">K5</span>`;
  lanes += `<div class="lane"><svg width="1200" height="60">${grid(60)}${art[t]()}</svg>${text}</div>`;
}
el("lanes").innerHTML = lanes;

/* playhead */
el("playhead").innerHTML = `<defs><linearGradient id="glow"><stop offset="0" stop-color="#8a4a00" stop-opacity="0"/><stop offset="1" stop-color="#a85c00"/></linearGradient></defs><rect x="7" y="20" width="12" height="100%" fill="url(#glow)"/><rect x="18" y="20" width="2" height="100%" fill="#ffb765"/><path d="M12 2h14v4l-7 7-7-7z" fill="#f6b04e"/>`;
```
